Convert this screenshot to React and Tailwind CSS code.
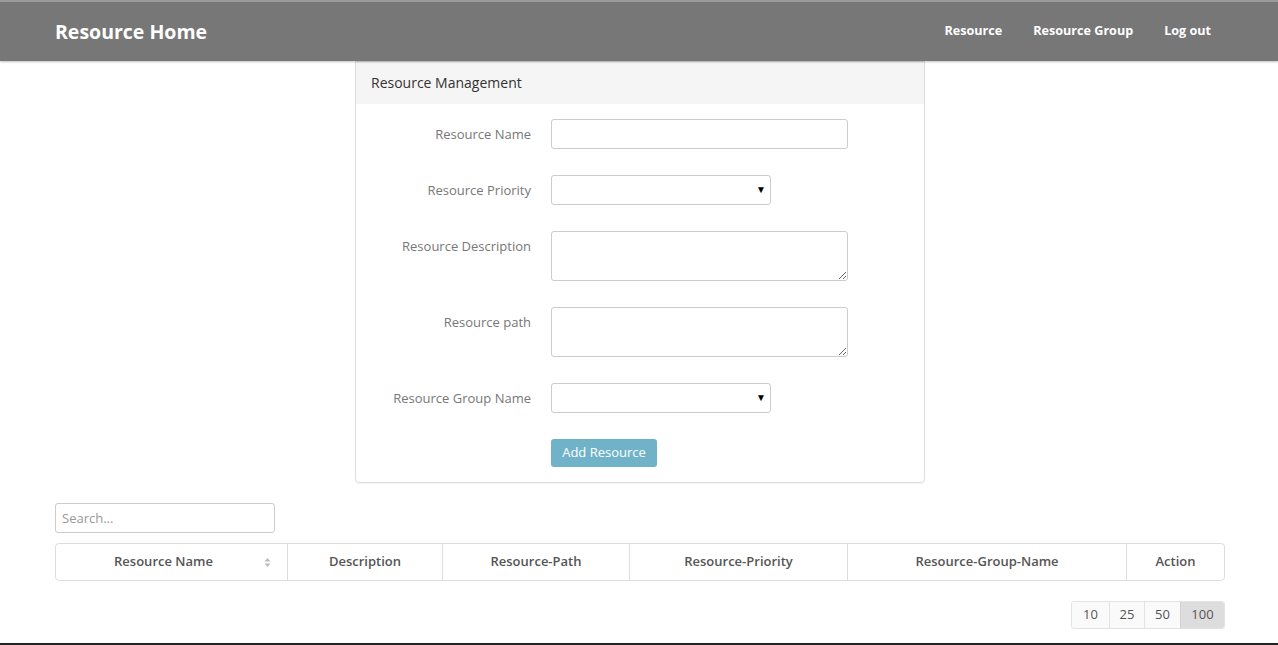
import React from 'react';

const font = { fontFamily: '"Open Sans", "Liberation Sans", sans-serif' };

// one label + control row of the management form
function FormRow({ label, children }) {
  return (
    <div className="flex">
      <div className="w-[195px] shrink-0 pr-[20px] pt-[7px] text-right text-[13px] leading-[16px] text-[#777]">
        {label}
      </div>
      <div>{children}</div>
    </div>
  );
}

function Select() {
  return (
    <div className="relative w-[220px]">
      <select className="h-[30px] w-[220px] appearance-none rounded-[3px] border border-[#ccc] bg-white px-2 text-[13px] outline-none" />
      <span className="pointer-events-none absolute right-[5px] top-[7px] text-[10px] text-black">▼</span>
    </div>
  );
}

const columns = [
  { name: 'Resource Name', w: 'w-[231px]', sort: true },
  { name: 'Description', w: 'w-[155px]' },
  { name: 'Resource-Path', w: 'w-[187px]' },
  { name: 'Resource-Priority', w: 'w-[218px]' },
  { name: 'Resource-Group-Name', w: 'w-[279px]' },
  { name: 'Action', w: 'w-[98px]' },
];

export default function App() {
  return (
    <div className="min-h-[645px] bg-white" style={font}>
      {/* Top navbar */}
      <div className="relative z-10 h-[61px] border-t-2 border-[#9b9b9b] bg-[#777] pl-[2px] shadow-[0_1px_2px_rgba(0,0,0,0.25)]">
        <div className="mx-auto flex h-full w-[1170px] items-center justify-between">
          <div className="text-[19.5px] font-bold text-white">Resource Home</div>
          <div className="flex gap-[31px] pr-[14px] text-[12.6px] font-bold text-white">
            <span>Resource</span>
            <span>Resource Group</span>
            <span>Log out</span>
          </div>
        </div>
      </div>

      <div className="pl-[2px]">
        {/* Resource management panel */}
        <div className="mx-auto w-[570px] rounded-b-[4px] border border-[#ddd] shadow-[0_1px_1px_rgba(0,0,0,0.05)]">
          <div className="h-[42px] bg-[#f5f5f5] px-[15px] pt-[10px] text-[14px] text-[#333]">
            Resource Management
          </div>
          <div className="flex flex-col gap-[26px] pb-[15px] pt-[15px]">
            <FormRow label="Resource Name">
              <input className="h-[30px] w-[297px] rounded-[3px] border border-[#ccc] px-2 text-[13px] outline-none" />
            </FormRow>
            <FormRow label="Resource Priority">
              <Select />
            </FormRow>
            <FormRow label="Resource Description">
              <textarea className="block h-[50px] w-[297px] rounded-[3px] border border-[#ccc] px-2 text-[13px] outline-none" />
            </FormRow>
            <FormRow label="Resource path">
              <textarea className="block h-[50px] w-[297px] rounded-[3px] border border-[#ccc] px-2 text-[13px] outline-none" />
            </FormRow>
            <FormRow label="Resource Group Name">
              <Select />
            </FormRow>
            <FormRow label="">
              <button className="-mt-[7px] h-[28px] w-[106px] rounded-[3px] bg-[#70b3c9] text-[13px] text-white">
                Add Resource
              </button>
            </FormRow>
          </div>
        </div>

        {/* Table area */}
        <div className="mx-auto w-[1170px] pt-[20px]">
          <input
            placeholder="Search..."
            className="h-[30px] w-[220px] rounded-[3px] border border-[#ccc] px-[6px] text-[13px] outline-none placeholder:text-[#999]"
          />
          <div className="mt-[10px] flex h-[38px] rounded-[4px] border border-[#ddd]">
            {columns.map((c, i) => (
              <div
                key={c.name}
                className={`${c.w} relative flex items-center justify-center text-[13px] font-semibold text-[#555] ${
                  i > 0 ? 'border-l border-[#ddd]' : ''
                } ${c.sort ? 'pr-[16px]' : ''}`}
              >
                {c.name}
                {c.sort && (
                  <span className="absolute right-[16px] top-[13px] flex flex-col items-center leading-none">
                    <svg width="7" height="11" viewBox="0 0 7 11">
                      <path d="M3.5 1 L6.5 4.5 L0.5 4.5 Z" fill="#bbb" />
                      <path d="M3.5 10 L6.5 6.5 L0.5 6.5 Z" fill="#bbb" />
                    </svg>
                  </span>
                )}
              </div>
            ))}
          </div>

          <div className="mt-[20px] flex justify-end">
            <div className="flex h-[28px] overflow-hidden rounded-[3px] border border-[#e3e3e3] text-[13px] text-[#555]">
              <span className="flex w-[37px] items-center justify-center bg-[#fafafa]">10</span>
              <span className="flex w-[35px] items-center justify-center border-l border-[#e3e3e3] bg-[#fafafa]">25</span>
              <span className="flex w-[36px] items-center justify-center border-l border-[#e3e3e3] bg-[#fafafa]">50</span>
              <span className="flex w-[44px] items-center justify-center border-l border-[#d0d0d0] bg-[#ddd]">100</span>
            </div>
          </div>
        </div>
      </div>

      <div className="mt-[14px] h-[40px] bg-[#222]" />
    </div>
  );
}
